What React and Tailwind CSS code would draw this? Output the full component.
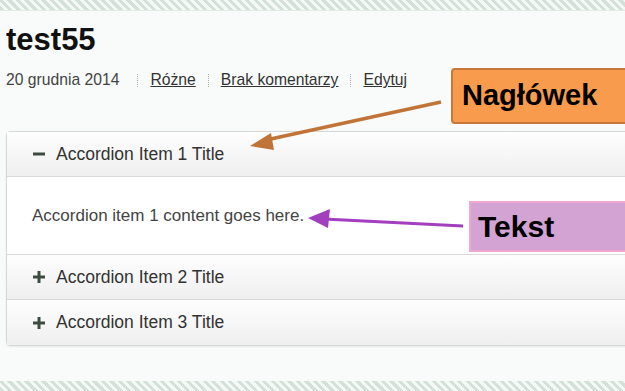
const stripes =
    'bg-[repeating-linear-gradient(45deg,#d3e1d8_0px,#d3e1d8_3px,#f4f8f6_3px,#f4f8f6_6px)]';

const Minus = () => (
    <svg width="12" height="12" viewBox="0 0 12 12">
        <rect x="0" y="4.5" width="12" height="3" fill="#3e4b41" />
    </svg>
);

const Plus = () => (
    <svg width="12" height="12" viewBox="0 0 12 12">
        <rect x="0" y="4.5" width="12" height="3" fill="#3e4b41" />
        <rect x="4.5" y="0" width="3" height="12" fill="#3e4b41" />
    </svg>
);

const AccordionHeader = ({ open, title, last }) => (
    <div
        className={`flex h-[45px] items-center gap-[11px] bg-gradient-to-b from-[#fefefe] to-[#efefef] pl-[26px] ${
            last ? '' : 'border-b border-[#d9d9d9]'
        }`}>
        {open ? <Minus /> : <Plus />}
        <span className="text-[17.5px] text-[#333]">{title}</span>
    </div>
);

const Separator = () => (
    <span className="mx-[12px] inline-block h-[13px] border-l border-dotted border-[#aaa] align-middle" />
);

export default function App() {
    return (
        <div className="relative flex h-[391px] w-[625px] flex-col overflow-hidden bg-[#f9fbfa] font-['Liberation_Sans',Arial,sans-serif]">
            <div className={`h-[10px] shrink-0 ${stripes}`} />
            <div className="h-px shrink-0 bg-[#e2ebe5]" />

            <main className="flex-1 pl-[6px]">
                <h1 className="mt-[13px] text-[31px] font-bold leading-none text-[#111]">
                    test55
                </h1>
                <div className="mt-[15px] flex h-[20px] items-center text-[15.7px] text-[#444]">
                    <span className="mr-[6px]">20 grudnia 2014</span>
                    <Separator />
                    <a className="text-[#333] underline">Różne</a>
                    <Separator />
                    <a className="text-[#333] underline">Brak komentarzy</a>
                    <Separator />
                    <a className="text-[#333] underline">Edytuj</a>
                </div>

                <div className="mt-[41px] -mr-[4px] rounded-sm border border-[#d6d6d6] shadow-[0_1px_2px_rgba(0,0,0,0.08)]">
                    <AccordionHeader open title="Accordion Item 1 Title" />
                    <div className="flex h-[78px] items-center border-b border-[#d9d9d9] bg-white pl-[25px] text-[17px] text-[#444]">
                        Accordion item 1 content goes here.
                    </div>
                    <AccordionHeader title="Accordion Item 2 Title" />
                    <AccordionHeader title="Accordion Item 3 Title" last />
                </div>
            </main>

            <div className={`h-[10px] shrink-0 ${stripes}`} />

            {/* annotation overlays */}
            <div className="absolute left-[451px] top-[68px] flex h-[56px] w-[190px] items-center rounded-sm border-2 border-[#c8763a] bg-[#f99b4c] pl-[9px] text-[29px] font-bold text-black">
                Nagłówek
            </div>
            <div className="absolute left-[469px] top-[201px] flex h-[51px] w-[170px] items-center border-2 border-[#f3a6cf] bg-[#d3a3d3] pl-[7px] text-[30px] font-bold text-black">
                Tekst
            </div>
            <svg
                className="pointer-events-none absolute inset-0"
                width="625"
                height="391"
                viewBox="0 0 625 391">
                <line x1="441" y1="102" x2="266" y2="140" stroke="#c17437" strokeWidth="3.5" />
                <polygon points="250,146 271,133 274,150" fill="#c17437" />
                <line x1="463" y1="226" x2="324" y2="219" stroke="#a23fbf" strokeWidth="3" />
                <polygon points="308,218 330,209 328,228" fill="#a23fbf" />
            </svg>
        </div>
    );
}
